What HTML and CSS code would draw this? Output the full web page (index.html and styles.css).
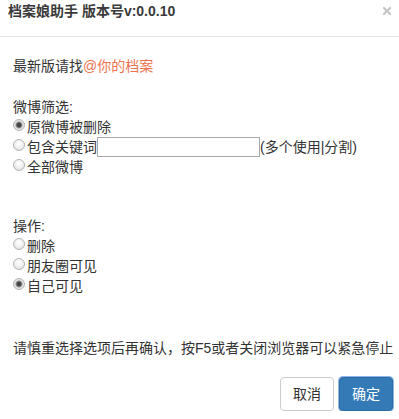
FILE: index.html
```html
<!DOCTYPE html>
<html lang="zh-CN">
<head>
<meta charset="utf-8">
<title>档案娘助手</title>
<link rel="stylesheet" href="styles.css">
</head>
<body>
<div class="modal">
  <div class="modal-header">
    <h4 class="modal-title">档案娘助手 版本号v:0.0.10</h4>
    <button class="close" type="button" aria-label="关闭">
      <svg width="8" height="8" viewBox="0 0 8 8"><path d="M1 1L7 7M7 1L1 7" stroke="#c4c4c4" stroke-width="2" stroke-linecap="square"/></svg>
    </button>
  </div>
  <div class="modal-body">
    <p class="line">最新版请找<a class="link" href="#">@你的档案</a></p>
    <div class="group first">
      <div class="line">微博筛选:</div>
      <label class="line"><input type="radio" name="filter" checked>原微博被删除</label>
      <label class="line"><input type="radio" name="filter">包含关键词<input type="text" class="keyword">(多个使用|分割)</label>
      <label class="line"><input type="radio" name="filter">全部微博</label>
    </div>
    <div class="group second">
      <div class="line">操作:</div>
      <label class="line"><input type="radio" name="op">删除</label>
      <label class="line"><input type="radio" name="op">朋友圈可见</label>
      <label class="line"><input type="radio" name="op" checked>自己可见</label>
    </div>
    <p class="line note">请慎重选择选项后再确认，按F5或者关闭浏览器可以紧急停止</p>
  </div>
  <div class="modal-footer">
    <button type="button" class="btn btn-default">取消</button>
    <button type="button" class="btn btn-primary">确定</button>
  </div>
</div>
</body>
</html>
```

FILE: styles.css
```css
html, body {
  margin: 0;
  padding: 0;
  background: #fff;
}
body {
  font-family: "Liberation Sans", "Noto Sans CJK SC", sans-serif;
  font-size: 14px;
  line-height: 20px;
  color: #333;
}
.modal {
  width: 399px;
}
.modal-header {
  display: flex;
  justify-content: space-between;
  align-items: flex-start;
  padding: 1px 8px 15px 8px;
  border-bottom: 1px solid #e5e5e5;
}
.modal-title {
  margin: 0;
  font-size: 14px;
  line-height: 20px;
  font-weight: bold;
  color: #3a3a3a;
}
.close {
  border: 0;
  background: none;
  padding: 0;
  margin: 6px 0 0 0;
  width: 8px;
  height: 8px;
  display: block;
  cursor: pointer;
}
.close svg {
  display: block;
}
.modal-body {
  padding: 19px 0 0 13px;
}
.line {
  display: block;
  margin: 0;
  line-height: 20px;
  white-space: nowrap;
}
.link {
  color: #eb7350;
  text-decoration: none;
}
.group.first {
  margin-top: 21px;
}
.group.second {
  margin-top: 39px;
}
.note {
  margin-top: 42px;
}
input[type="radio"] {
  -webkit-appearance: none;
  appearance: none;
  width: 12px;
  height: 12px;
  margin: 2px 2px 0 0;
  padding: 0;
  vertical-align: top;
  border: 1px solid #b4b4b4;
  border-radius: 50%;
  background: radial-gradient(circle at 50% 35%, #ffffff 0%, #f2f2f2 45%, #d8d8d8 100%);
  box-sizing: border-box;
}
input[type="radio"]:checked {
  background: radial-gradient(circle, #3f3f3f 0, #4a4a4a 2px, #9a9a9a 3px, #e6e6e6 4px, #dcdcdc 100%);
}
.keyword {
  width: 163px;
  height: 20px;
  box-sizing: border-box;
  border: 1px solid #a9a9a9;
  padding: 0 2px;
  margin: 0;
  vertical-align: top;
  font: inherit;
  background: #fff;
}
.modal-footer {
  display: flex;
  justify-content: flex-end;
  gap: 5px;
  margin-top: 19px;
  padding-right: 6px;
}
.btn {
  font-family: "Liberation Sans", "Noto Sans CJK SC", sans-serif;
  font-size: 14px;
  line-height: 20px;
  padding: 6px 12px;
  border-radius: 4px;
  border: 1px solid #ccc;
  height: 34px;
  box-sizing: border-box;
  white-space: nowrap;
  cursor: pointer;
}
.btn-default {
  background: #fff;
  color: #333;
}
.btn-primary {
  background: #337ab7;
  border-color: #2e6da4;
  color: #fff;
  box-shadow: 0 0 0 1px #8fb6e6;
}
```
